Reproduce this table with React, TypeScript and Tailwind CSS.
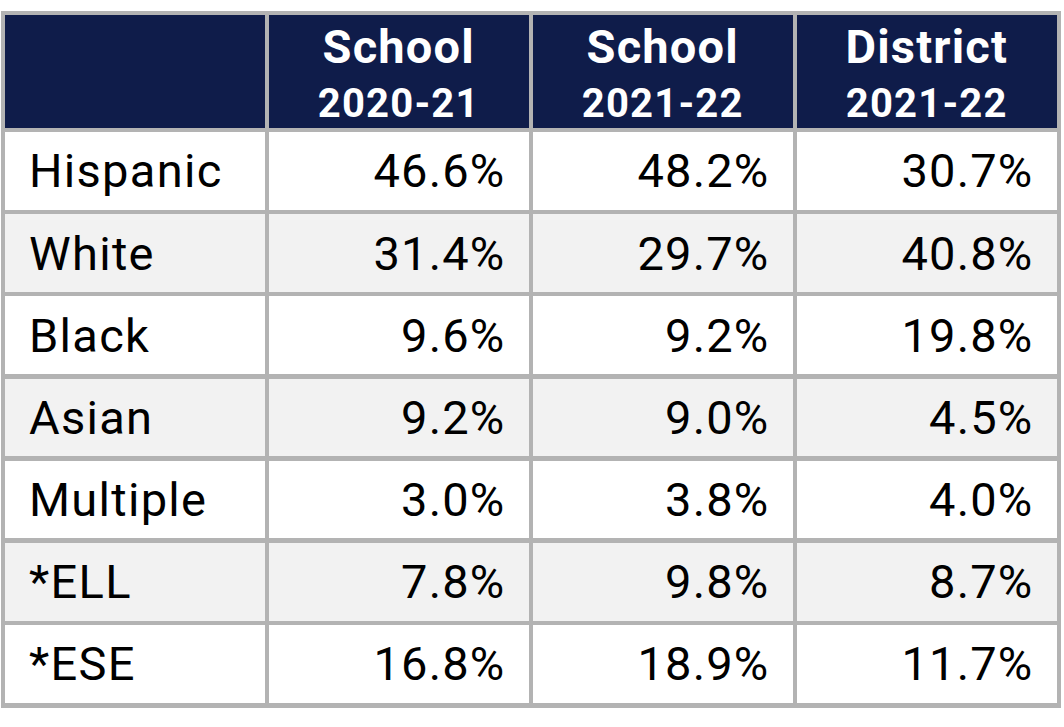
import React from "react";

const rows: [string, string, string, string][] = [
  ["Hispanic", "46.6%", "48.2%", "30.7%"],
  ["White", "31.4%", "29.7%", "40.8%"],
  ["Black", "9.6%", "9.2%", "19.8%"],
  ["Asian", "9.2%", "9.0%", "4.5%"],
  ["Multiple", "3.0%", "3.8%", "4.0%"],
  ["*ELL", "7.8%", "9.8%", "8.7%"],
  ["*ESE", "16.8%", "18.9%", "11.7%"],
];

const headers: [string, string][] = [
  ["School", "2020-21"],
  ["School", "2021-22"],
  ["District", "2021-22"],
];

export default function App() {
  return (
    <div className="w-[1064px] h-[727px] bg-white overflow-hidden" style={{ fontFamily: "Roboto, 'Liberation Sans', sans-serif" }}>
      <div className="ml-[1px] mt-[11px] w-[1060px] bg-[#b3b3b3] pl-[4px] pt-[4px] pr-[4.5px] pb-[5px] grid grid-cols-4 grid-rows-[112.5px_repeat(7,77.7px)] gap-x-[4.5px] gap-y-[4.5px]">
        <div className="bg-[#0f1c4a]" />
        {headers.map(([a, b], i) => (
          <div key={i} className="bg-[#0f1c4a] flex flex-col items-center text-white font-bold tracking-[1.2px]">
            <div className="mt-[8px] text-[47px] leading-none">{a}</div>
            <div className="mt-[14px] text-[40px] leading-none">{b}</div>
          </div>
        ))}
        {rows.map((r, ri) => {
          const bg = ri % 2 === 0 ? "bg-white" : "bg-[#f2f2f2]";
          return (
            <React.Fragment key={ri}>
              <div className={`${bg} flex items-center pl-[24px] text-[47px] leading-none text-black tracking-[1.3px]`}>{r[0]}</div>
              {r.slice(1).map((v, ci) => (
                <div key={ci} className={`${bg} flex items-center justify-end pr-[23px] text-[47px] leading-none text-black tracking-[1.2px]`}>
                  {v}
                </div>
              ))}
            </React.Fragment>
          );
        })}
      </div>
    </div>
  );
}
